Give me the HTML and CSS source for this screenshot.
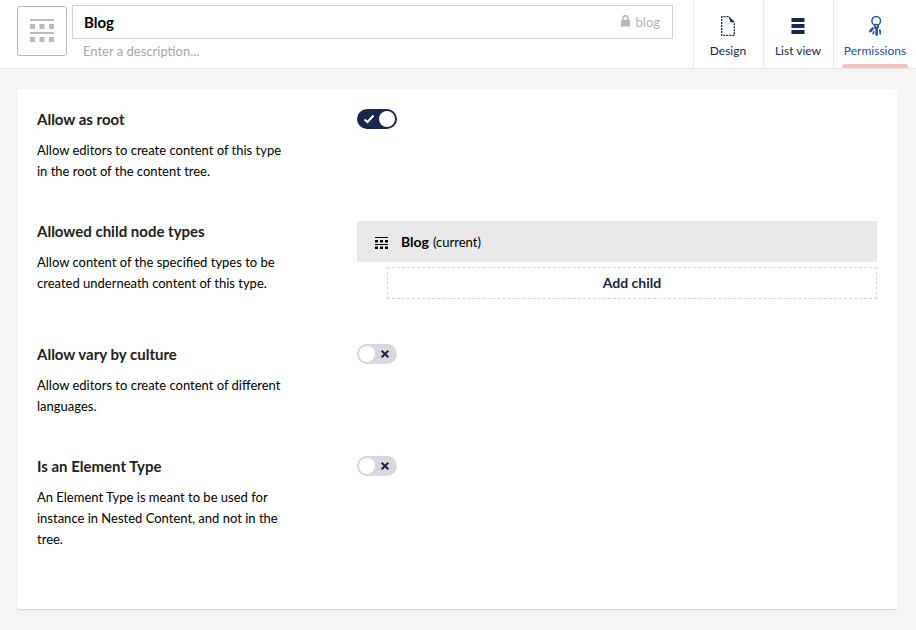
FILE: index.html
```html
<!DOCTYPE html>
<html lang="en">
<head>
<meta charset="utf-8">
<title>Blog</title>
<link rel="stylesheet" href="styles.css">
</head>
<body>
<svg class="defs" width="0" height="0">
  <symbol id="grid" viewBox="0 0 24 24">
    <path d="M0 0h24v2H0zM0 13h24v2H0zM0 5h5v5H0zM9.500 5h5v5h-5zM19 5h5v5h-5zM0 18h5v5H0zM9.500 18h5v5h-5zM19 18h5v5h-5z"/>
  </symbol>
</svg>
<header class="header">
  <button class="type-icon"><svg width="24" height="24"><use href="#grid"/></svg></button>
  <div class="fields">
    <div class="name-box">
      <span class="name">Blog</span>
      <svg class="lock" width="9" height="12" viewBox="0 0 9 12"><path d="M0 5h9v6.500H0z"/><path class="shackle" d="M2 5.500V3a2.500 2.300 0 0 1 5 0v2.500"/></svg>
      <span class="alias">blog</span>
    </div>
    <div class="description">Enter a description...</div>
  </div>
  <nav class="tabs">
    <a class="tab">
      <svg width="20" height="20" viewBox="0 0 20 20"><path class="dashes" d="M10.500.700H3.700v18.600h12.600V6.500"/><path d="M10.500 0L17 6.300h-4.500z"/></svg>
      <span>Design</span>
    </a>
    <a class="tab">
      <svg width="20" height="20" viewBox="0 0 20 20"><path d="M3.500 2h13v4h-13zM3.500 8h13v4h-13zM3.500 14h13v4h-13z"/></svg>
      <span>List view</span>
    </a>
    <a class="tab active">
      <svg width="20" height="20" viewBox="0 0 20 20"><circle class="ring" cx="11.200" cy="4.900" r="4.300"/><path d="M8.700 8.500l2.500-.9 2.600 1.200.4 2.400-1.300 1.400v6.700l-1.300.7-1.200-.8v-6.300l-1.400-1z"/><path d="M7.300 11l1.900 1.600-1.700 1.900-.9 1.400-2.500.5.300-2.200zM13.900 13l2 1v4.500l-1.300.3z"/><path d="M8.300 15.200l1.100-1v3.400l-1.600 1.100-.6-1.200z"/><circle class="hole" cx="11.300" cy="9.900" r=".8"/></svg>
      <span>Permissions</span>
    </a>
  </nav>
</header>
<main class="panel">
  <section class="row">
    <div class="info"><h2>Allow as root</h2><p>Allow editors to create content of this type in the root of the content tree.</p></div>
    <div class="control"><div class="toggle on"><svg width="12" height="10" viewBox="0 0 12 10"><path d="M1.500 5.500L4.500 8 10.500 1.500"/></svg><i></i></div></div>
  </section>
  <section class="row children">
    <div class="info"><h2>Allowed child node types</h2><p>Allow content of the specified types to be created underneath content of this type.</p></div>
    <div class="control">
      <div class="node"><svg width="13" height="12" viewBox="0 0 13 12"><path d="M0 0h13v1H0zM0 7h13v1H0zM0 3h3v2.500H0zM5 3h3v2.500H5zM10 3h3v2.500h-3zM0 9.500h3V12H0zM5 9.500h3V12H5zM10 9.500h3V12h-3z"/></svg><b>Blog</b><span>(current)</span></div>
      <button class="add">Add child</button>
    </div>
  </section>
  <section class="row">
    <div class="info"><h2>Allow vary by culture</h2><p>Allow editors to create content of different languages.</p></div>
    <div class="control"><div class="toggle"><i></i><svg width="8" height="8" viewBox="0 0 8 8"><path d="M.7.7l6.600 6.600M7.300.7L.7 7.300"/></svg></div></div>
  </section>
  <section class="row">
    <div class="info"><h2>Is an Element Type</h2><p>An Element Type is meant to be used for instance in Nested Content, and not in the tree.</p></div>
    <div class="control"><div class="toggle"><i></i><svg width="8" height="8" viewBox="0 0 8 8"><path d="M.7.7l6.600 6.600M7.300.7L.7 7.300"/></svg></div></div>
  </section>
</main>
</body>
</html>
```
FILE: styles.css
```css
* { box-sizing: border-box; }
body { margin: 0; height: 630px; overflow: hidden; background: #f5f3f4; color: #000; font: 13px/21px Lato, sans-serif; }
button { font: inherit; padding: 0; }
svg { display: block; fill: currentColor; flex: none; }
.defs { position: absolute; }
.header { display: flex; height: 69px; background: #fff; border-bottom: 1px solid #e6e5e6; padding-left: 17px; }
.type-icon { width: 50px; height: 50px; margin-top: 6px; border: 1px solid #b9b9bb; border-radius: 3px; background: #fff; color: #bbbabf; display: flex; align-items: center; justify-content: center; }
.type-icon svg { margin-top: -1px; }
.fields { width: 601px; margin: 5px 0 0 5px; }
.name-box { display: flex; align-items: center; height: 34px; border: 1px solid #d3d3d5; padding: 0 12px 0 11px; }
.name { flex: 1; font-size: 15px; font-weight: 700; }
.lock { color: #b8b8bb; margin: -3px 6px 0 0; }
.shackle { fill: none; stroke: currentColor; stroke-width: 1.500; }
.alias { color: #b3b3b6; }
.description { padding-left: 11px; margin-top: 2px; color: #a5a5a8; }
.tabs { display: flex; margin-left: 20px; }
.tab { width: 70px; border-left: 1px solid #e9e9eb; display: flex; flex-direction: column; align-items: center; padding: 16px 1px 0 0; color: #1b264f; font-size: 12px; line-height: 20px; position: relative; }
.tab span { margin-top: 5px; white-space: nowrap; }
.tab.active { width: 83px; color: #2152a3; padding-right: 0; }
.tab.active::after { content: ""; position: absolute; left: 8px; right: 8px; bottom: 0; height: 4px; background: #f5c1bc; border-radius: 3px 3px 0 0; }
.dashes { fill: none; stroke: currentColor; stroke-width: 1.300; stroke-dasharray: 2 1; }
.ring { fill: none; stroke: currentColor; stroke-width: 1.400; }
.hole { fill: #fff; }
.panel { width: 880px; height: 520px; margin: 20px 0 0 17px; padding: 20px; background: #fff; border-radius: 3px; box-shadow: 0 1px 1px rgba(0,0,0,.16); }
.row { display: flex; height: 112px; }
.row.children { height: 123px; }
.info { width: 250px; margin-right: 70px; }
h2 { margin: 0 0 10px; font-size: 15px; line-height: 21px; color: #212121; }
p { margin: 0; }
.control { width: 520px; }
.toggle { width: 40px; height: 20px; border-radius: 10px; background: #d8d7d9; display: flex; align-items: center; padding: 0 2px; color: #1b264f; }
.toggle i { width: 16px; height: 16px; border-radius: 50%; background: #fff; }
.toggle path { fill: none; stroke: currentColor; stroke-width: 2; }
.toggle svg { margin-left: 6px; }
.toggle.on { background: #1b264f; color: #fff; }
.toggle.on svg { margin: 0 4px 0 4px; }
.node { display: flex; align-items: center; height: 41px; background: #e9e9eb; padding-left: 18px; }
.node svg { margin-top: 3px; }
.node b { margin: 0 4px 0 13px; font-size: 14px; }
.node span { margin-top: 1px; }
.add { display: block; width: 490px; height: 32px; margin: 5px 0 0 30px; padding-bottom: 2px; border: 1px dashed #d8d7d9; background: #fff; color: #1b264f; font-size: 14px; font-weight: 700; }
```
